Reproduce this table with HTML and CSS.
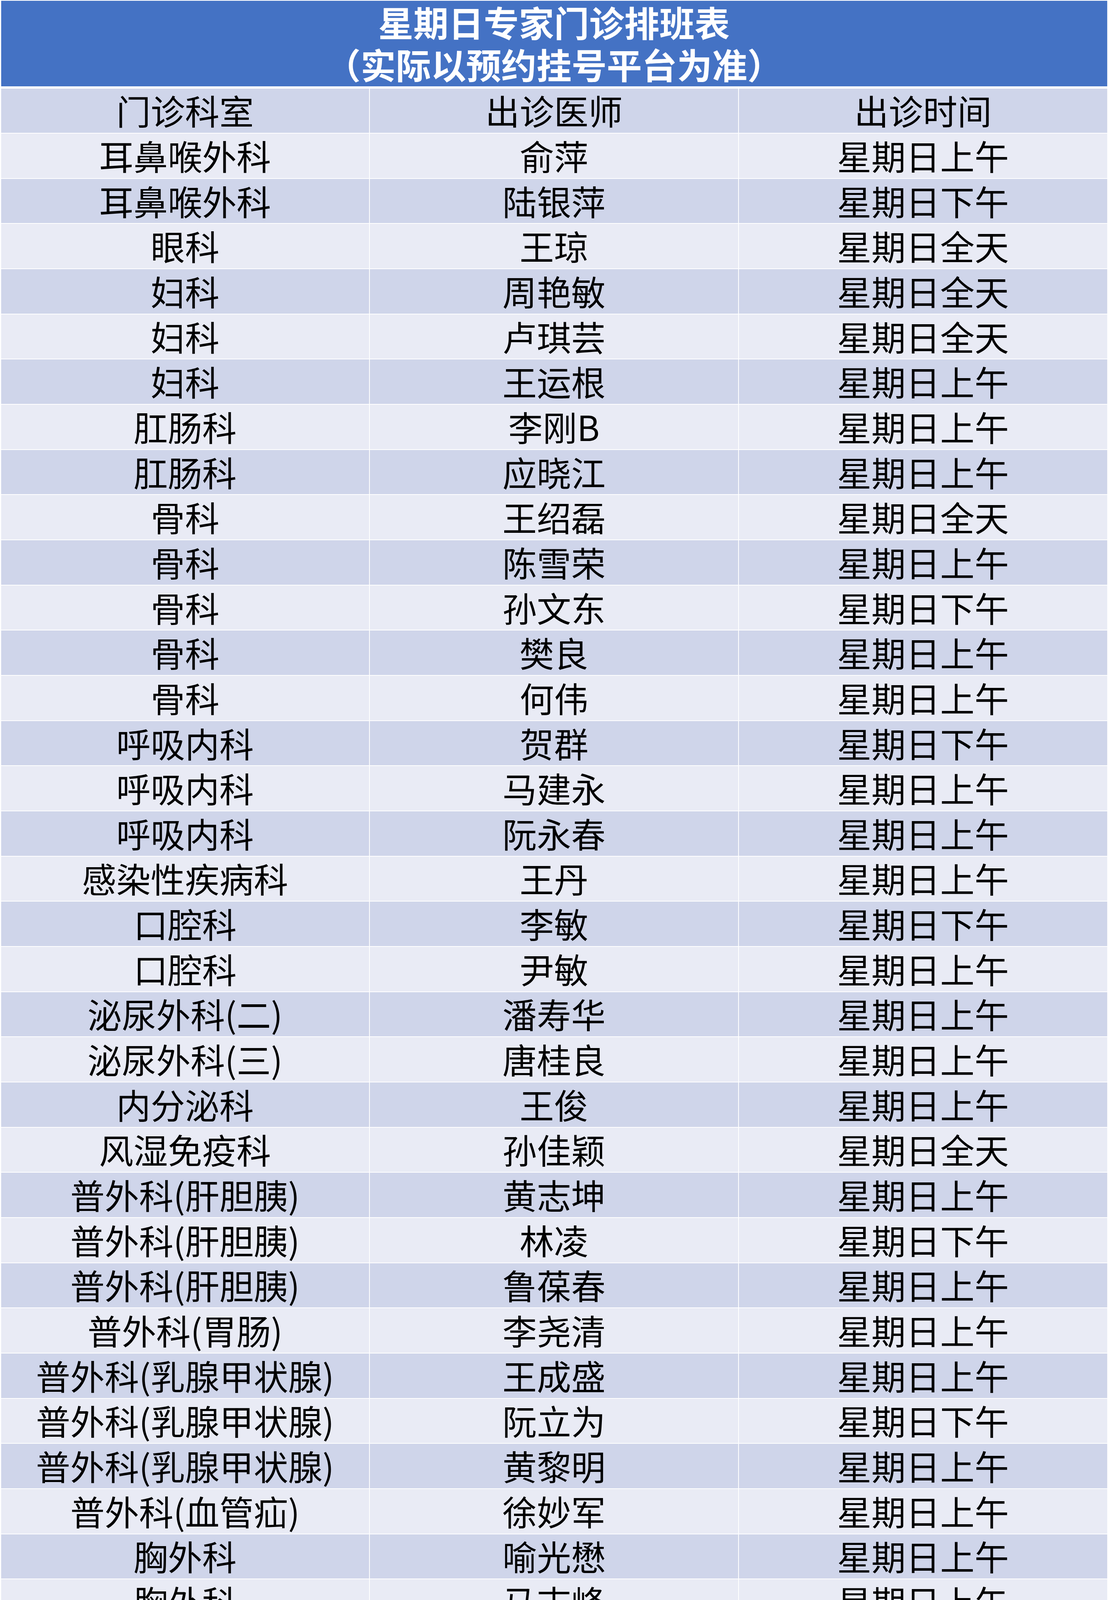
FILE: index.html
```html
<!DOCTYPE html>
<html lang="zh-CN">
<head>
<meta charset="utf-8">
<title>星期日专家门诊排班表</title>
<link rel="stylesheet" href="styles.css">
</head>
<body>
<div class="sheet">
  <div class="title">
    <div class="title-line">星期日专家门诊排班表</div>
    <div class="title-line">（实际以预约挂号平台为准）</div>
  </div>
  <div class="table">
    <div class="row"><div class="cell">门诊科室</div><div class="cell">出诊医师</div><div class="cell">出诊时间</div></div>
    <div class="row"><div class="cell">耳鼻喉外科</div><div class="cell">俞萍</div><div class="cell">星期日上午</div></div>
    <div class="row"><div class="cell">耳鼻喉外科</div><div class="cell">陆银萍</div><div class="cell">星期日下午</div></div>
    <div class="row"><div class="cell">眼科</div><div class="cell">王琼</div><div class="cell">星期日全天</div></div>
    <div class="row"><div class="cell">妇科</div><div class="cell">周艳敏</div><div class="cell">星期日全天</div></div>
    <div class="row"><div class="cell">妇科</div><div class="cell">卢琪芸</div><div class="cell">星期日全天</div></div>
    <div class="row"><div class="cell">妇科</div><div class="cell">王运根</div><div class="cell">星期日上午</div></div>
    <div class="row"><div class="cell">肛肠科</div><div class="cell">李刚B</div><div class="cell">星期日上午</div></div>
    <div class="row"><div class="cell">肛肠科</div><div class="cell">应晓江</div><div class="cell">星期日上午</div></div>
    <div class="row"><div class="cell">骨科</div><div class="cell">王绍磊</div><div class="cell">星期日全天</div></div>
    <div class="row"><div class="cell">骨科</div><div class="cell">陈雪荣</div><div class="cell">星期日上午</div></div>
    <div class="row"><div class="cell">骨科</div><div class="cell">孙文东</div><div class="cell">星期日下午</div></div>
    <div class="row"><div class="cell">骨科</div><div class="cell">樊良</div><div class="cell">星期日上午</div></div>
    <div class="row"><div class="cell">骨科</div><div class="cell">何伟</div><div class="cell">星期日上午</div></div>
    <div class="row"><div class="cell">呼吸内科</div><div class="cell">贺群</div><div class="cell">星期日下午</div></div>
    <div class="row"><div class="cell">呼吸内科</div><div class="cell">马建永</div><div class="cell">星期日上午</div></div>
    <div class="row"><div class="cell">呼吸内科</div><div class="cell">阮永春</div><div class="cell">星期日上午</div></div>
    <div class="row"><div class="cell">感染性疾病科</div><div class="cell">王丹</div><div class="cell">星期日上午</div></div>
    <div class="row"><div class="cell">口腔科</div><div class="cell">李敏</div><div class="cell">星期日下午</div></div>
    <div class="row"><div class="cell">口腔科</div><div class="cell">尹敏</div><div class="cell">星期日上午</div></div>
    <div class="row"><div class="cell">泌尿外科(二)</div><div class="cell">潘寿华</div><div class="cell">星期日上午</div></div>
    <div class="row"><div class="cell">泌尿外科(三)</div><div class="cell">唐桂良</div><div class="cell">星期日上午</div></div>
    <div class="row"><div class="cell">内分泌科</div><div class="cell">王俊</div><div class="cell">星期日上午</div></div>
    <div class="row"><div class="cell">风湿免疫科</div><div class="cell">孙佳颖</div><div class="cell">星期日全天</div></div>
    <div class="row"><div class="cell">普外科(肝胆胰)</div><div class="cell">黄志坤</div><div class="cell">星期日上午</div></div>
    <div class="row"><div class="cell">普外科(肝胆胰)</div><div class="cell">林凌</div><div class="cell">星期日下午</div></div>
    <div class="row"><div class="cell">普外科(肝胆胰)</div><div class="cell">鲁葆春</div><div class="cell">星期日上午</div></div>
    <div class="row"><div class="cell">普外科(胃肠)</div><div class="cell">李尧清</div><div class="cell">星期日上午</div></div>
    <div class="row"><div class="cell">普外科(乳腺甲状腺)</div><div class="cell">王成盛</div><div class="cell">星期日上午</div></div>
    <div class="row"><div class="cell">普外科(乳腺甲状腺)</div><div class="cell">阮立为</div><div class="cell">星期日下午</div></div>
    <div class="row"><div class="cell">普外科(乳腺甲状腺)</div><div class="cell">黄黎明</div><div class="cell">星期日上午</div></div>
    <div class="row"><div class="cell">普外科(血管疝)</div><div class="cell">徐妙军</div><div class="cell">星期日上午</div></div>
    <div class="row"><div class="cell">胸外科</div><div class="cell">喻光懋</div><div class="cell">星期日上午</div></div>
    <div class="row"><div class="cell">胸外科</div><div class="cell">马志峰</div><div class="cell">星期日上午</div></div>
    <div class="row"><div class="cell">神经内科</div><div class="cell">朱仁洋</div><div class="cell">星期日下午</div></div>
    <div class="row"><div class="cell">神经内科</div><div class="cell">钟洁静</div><div class="cell">星期日上午</div></div>
    <div class="row"><div class="cell">神经内科</div><div class="cell">王黎萍</div><div class="cell">星期日下午</div></div>
    <div class="row"><div class="cell">神经内科</div><div class="cell">魏博</div><div class="cell">星期日下午</div></div>
    <div class="row"><div class="cell">神经外科</div><div class="cell">王晓明</div><div class="cell">星期日下午</div></div>
    <div class="row"><div class="cell">神经外科</div><div class="cell">俞学斌</div><div class="cell">星期日上午</div></div>
    <div class="row"><div class="cell">神经外科</div><div class="cell">包庆泉</div><div class="cell">星期日上午</div></div>
    <div class="row"><div class="cell">肾内科</div><div class="cell">龚淑文</div><div class="cell">星期日上午</div></div>
    <div class="row"><div class="cell">肿瘤内科</div><div class="cell">赵建国</div><div class="cell">星期日上午</div></div>
    <div class="row"><div class="cell">放疗科</div><div class="cell">徐俊</div><div class="cell">星期日上午</div></div>
    <div class="row"><div class="cell">疼痛科</div><div class="cell">陈栋樑</div><div class="cell">星期日上午</div></div>
    <div class="row"><div class="cell">消化内科</div><div class="cell">潘颖颖</div><div class="cell">星期日上午</div></div>
    <div class="row"><div class="cell">营养科</div><div class="cell">陈丽英（外院）</div><div class="cell">星期日上午</div></div>
    <div class="row"><div class="cell">小儿内科</div><div class="cell">邵晓丽</div><div class="cell">星期日上午</div></div>
    <div class="row"><div class="cell">小儿内科</div><div class="cell">胡淑英</div><div class="cell">星期日下午</div></div>
    <div class="row"><div class="cell">小儿内科</div><div class="cell">姚欢迎</div><div class="cell">星期日上午</div></div>
    <div class="row"><div class="cell">心血管内科</div><div class="cell">彭放</div><div class="cell">星期日上午</div></div>
    <div class="row"><div class="cell">心血管内科</div><div class="cell">徐步云</div><div class="cell">星期日下午</div></div>
    <div class="row"><div class="cell">心血管内科</div><div class="cell">许富康</div><div class="cell">星期日上午</div></div>
    <div class="row"><div class="cell">血液内科</div><div class="cell">洪攀</div><div class="cell">星期日全天</div></div>
    <div class="row"><div class="cell">中医科</div><div class="cell">徐晓晏</div><div class="cell">星期日全天</div></div>
    <div class="row"><div class="cell">针灸科</div><div class="cell">陈荣</div><div class="cell">星期日上午</div></div>
    <div class="row"><div class="cell">超声科（腹部）</div><div class="cell">孙建明</div><div class="cell">星期日上午</div></div>
    <div class="row"><div class="cell">超声科（乳腺甲状腺）</div><div class="cell">李星云</div><div class="cell">星期日上午</div></div>
    <div class="row"><div class="cell">放射科</div><div class="cell">章俞</div><div class="cell">星期日下午</div></div>
    <div class="row"><div class="cell">放射科</div><div class="cell">赵振华</div><div class="cell">星期日上午</div></div>
    <div class="row"><div class="cell">心理健康门诊</div><div class="cell">叶兰英</div><div class="cell">星期日下午</div></div>
  </div>
</div>
</body>
</html>
```

FILE: styles.css
```css
html, body {
  margin: 0;
  padding: 0;
  background: #ffffff;
}

body {
  font-family: "Noto Sans CJK SC", "Noto Sans", sans-serif;
  color: #000000;
}

.sheet {
  padding: 2px 2.5px 0 2.5px;
}

.title {
  height: 219px;
  margin-bottom: 3.5px;
  background: #4472c4;
  color: #ffffff;
  font-size: 90px;
  font-weight: 700;
  line-height: 108px;
  display: flex;
  flex-direction: column;
  justify-content: center;
  align-items: center;
  padding-bottom: 5px;
  box-sizing: border-box;
}

.title-line {
  white-space: nowrap;
}

.table {
  display: flex;
  flex-direction: column;
  gap: 2px;
  padding-top: 2px;
}

.row {
  display: grid;
  grid-template-columns: 1fr 1fr 1fr;
  gap: 2px;
  height: 113.66px;
}

.cell {
  display: flex;
  align-items: center;
  justify-content: center;
  font-size: 88px;
  line-height: 1;
  white-space: nowrap;
  background: #e9ebf5;
  padding-bottom: 4px;
  box-sizing: border-box;
}

.row:nth-child(odd) .cell {
  background: #cfd5ea;
}
```
